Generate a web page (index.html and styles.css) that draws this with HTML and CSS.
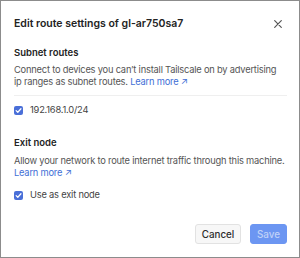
FILE: index.html
```html
<!DOCTYPE html>
<html>
<head>
<meta charset="utf-8">
<link rel="stylesheet" href="styles.css">
</head>
<body>
<div class="dialog">
  <div class="header">
    <h1 class="title">Edit route settings of gl-ar750sa7</h1>
    <button class="close" aria-label="Close">
      <svg width="8" height="8" viewBox="0 0 8 8"><path d="M0.7 0.7L7.3 7.3M7.3 0.7L0.7 7.3" stroke="#555" stroke-width="1.2" stroke-linecap="round"/></svg>
    </button>
  </div>
  <section class="section subnet">
    <h2 class="section-title">Subnet routes</h2>
    <p class="desc">Connect to devices you can’t install Tailscale on by advertising ip ranges as subnet routes. <a class="link" href="#">Learn more ↗</a></p>
    <hr class="rule">
    <label class="check-row"><span class="box"><svg width="7" height="7" viewBox="0 0 8 8"><path d="M1.3 4.2L3.2 6L6.8 2" fill="none" stroke="#fff" stroke-width="1.4" stroke-linecap="round" stroke-linejoin="round"/></svg></span>192.168.1.0/24</label>
  </section>
  <section class="section exit">
    <h2 class="section-title">Exit node</h2>
    <p class="desc">Allow your network to route internet traffic through this machine. <a class="link" href="#">Learn more ↗</a></p>
    <label class="check-row"><span class="box"><svg width="7" height="7" viewBox="0 0 8 8"><path d="M1.3 4.2L3.2 6L6.8 2" fill="none" stroke="#fff" stroke-width="1.4" stroke-linecap="round" stroke-linejoin="round"/></svg></span>Use as exit node</label>
  </section>
  <div class="footer">
    <button class="btn cancel">Cancel</button>
    <button class="btn save">Save</button>
  </div>
</div>
</body>
</html>
```
FILE: styles.css
```css
html, body { margin: 0; padding: 0; background: #fff; }
body { font-family: Inter, "Noto Sans", sans-serif; color: #222; }
.dialog {
  width: 298px; height: 256px; border: 1px solid #8c8c8c;
  display: flex; flex-direction: column;
}
.header { display: flex; align-items: center; justify-content: space-between; padding: 16px 17px 0 13px; height: 14px; }
.title { margin: 0; font-size: 10.5px; line-height: 14px; font-weight: 600; color: #232323; }
.close { background: none; border: 0; padding: 0; width: 8px; height: 8px; display: flex; }
.section { padding: 0 12px 0 13px; }
.subnet { margin-top: 16px; }
.section-title { margin: 0; font-size: 9.5px; font-weight: 600; color: #232323; line-height: 12px; }
.desc { margin: 5px 0 0; font-size: 9.3px; letter-spacing: -0.2px; line-height: 12px; color: #555; }
.subnet .desc { margin-right: 6px; }
.link { color: #3f6fd6; text-decoration: none; }
.rule { border: 0; border-top: 1px solid #efefef; margin: 7px 0 0; }
.check-row { display: flex; align-items: center; gap: 7px; font-size: 9.3px; letter-spacing: -0.2px; line-height: 12px; color: #444; margin-top: 8px; }
.box { width: 9px; height: 9px; background: #4a6fd8; border-radius: 2px; display: flex; align-items: center; justify-content: center; }
.exit { margin-top: 21px; }
.exit .desc { margin-top: 6px; }
.exit .check-row { margin-top: 10px; }
.footer { display: flex; justify-content: flex-end; gap: 9px; padding: 0 12px 0 0; margin-top: 23px; }
.btn { font-family: Inter, "Noto Sans", sans-serif; font-size: 9.8px; font-weight: 500; height: 20px; border-radius: 3px; padding: 0; }
.cancel { background: #f7f7f7; border: 1px solid #e2e2e2; color: #2b2b2b; width: 46px; }
.save { background: #6c96f2; border: 1px solid #6c96f2; color: #c0d2f8; width: 37px; }
```
